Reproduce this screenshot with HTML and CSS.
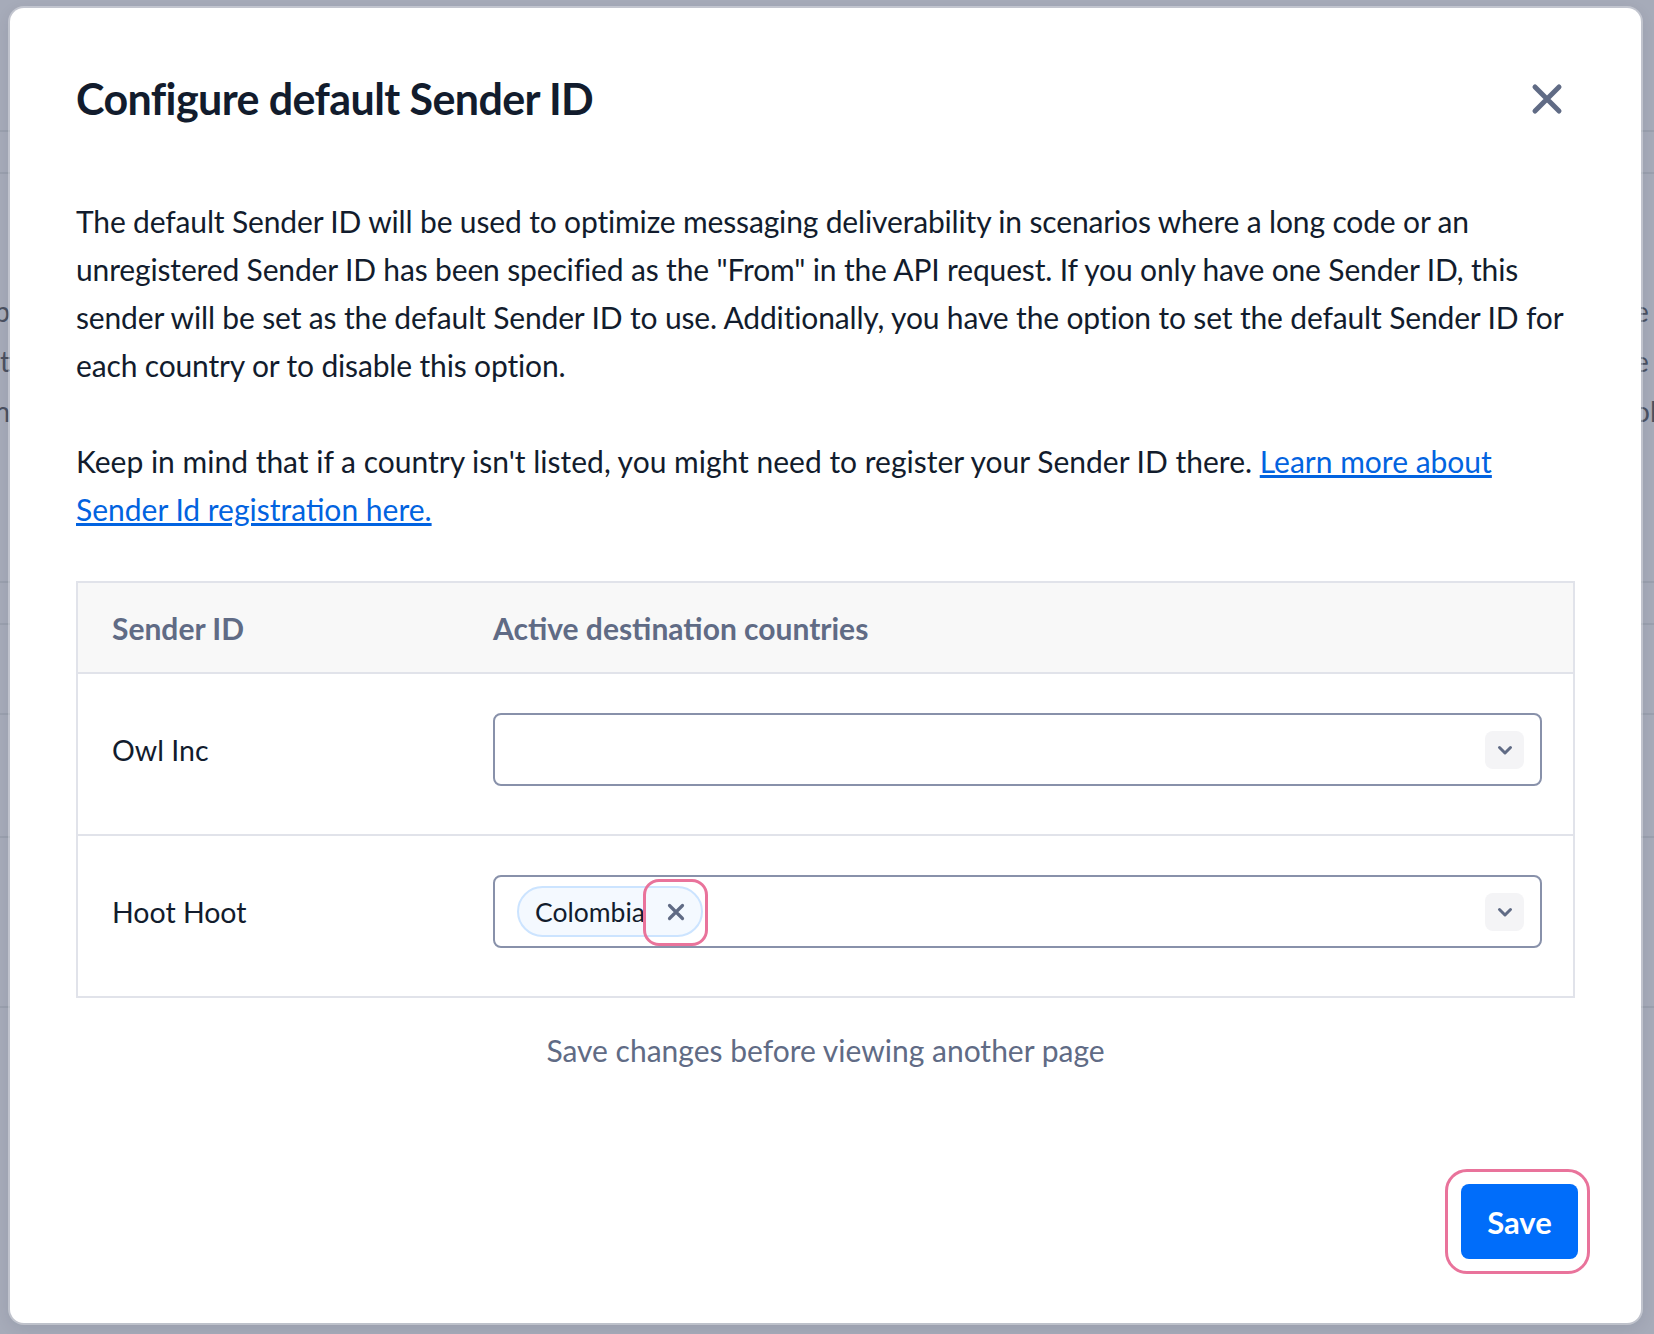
FILE: index.html
```html
<!DOCTYPE html>
<html lang="en">
<head>
    <meta charset="UTF-8">
    <title>Configure default Sender ID</title>
    <link rel="stylesheet" href="styles.css">
</head>
<body>

    <!-- Page behind the modal (dimmed) -->
    <div class="page">
        <div class="page-row tall"></div>
        <div class="page-row short"></div>
        <div class="page-row block">
            <div class="edge-text left">
                <span>op</span>
                <span>et</span>
                <span>n</span>
            </div>
            <div class="edge-text right">
                <span>e</span>
                <span>e</span>
                <span>ol</span>
            </div>
        </div>
        <div class="page-row short"></div>
        <div class="page-row mid"></div>
        <div class="page-row row2"></div>
        <div class="page-row row3"></div>
    </div>

    <div class="modal">
        <div class="modal-header">
            <h1>Configure default Sender ID</h1>
            <button class="close-btn" aria-label="Close">
                <svg width="32" height="32" viewBox="0 0 32 32">
                    <path d="M4 4 L28 28 M28 4 L4 28" stroke="#606b85" stroke-width="5" stroke-linecap="round" fill="none"/>
                </svg>
            </button>
        </div>

        <div class="modal-body">
            <p>The default Sender ID will be used to optimize messaging deliverability in scenarios where a long code or an unregistered Sender ID has been specified as the "From" in the API request. If you only have one Sender ID, this sender will be set as the default Sender ID to use. Additionally, you have the option to set the default Sender ID for each country or to disable this option.</p>
            <p class="hint">Keep in mind that if a country isn't listed, you might need to register your Sender ID there. <a href="#">Learn more about Sender Id registration here.</a></p>

            <table class="sender-table">
                <thead>
                    <tr>
                        <th class="col-sender">Sender ID</th>
                        <th>Active destination countries</th>
                    </tr>
                </thead>
                <tbody>
                    <tr>
                        <td class="col-sender">Owl Inc</td>
                        <td>
                            <div class="combo">
                                <div class="combo-values"></div>
                                <span class="chevron">
                                    <svg width="20" height="20" viewBox="0 0 20 20">
                                        <path d="M4.5 7.5 L10 13 L15.5 7.5" stroke="#606b85" stroke-width="3" stroke-linecap="round" stroke-linejoin="round" fill="none"/>
                                    </svg>
                                </span>
                            </div>
                        </td>
                    </tr>
                    <tr>
                        <td class="col-sender">Hoot Hoot</td>
                        <td>
                            <div class="combo">
                                <div class="combo-values">
                                    <span class="pill">
                                        Colombia
                                        <span class="pill-remove">
                                            <svg width="18" height="18" viewBox="0 0 18 18">
                                                <path d="M2.5 2.5 L15.5 15.5 M15.5 2.5 L2.5 15.5" stroke="#606b85" stroke-width="3.2" stroke-linecap="round" fill="none"/>
                                            </svg>
                                        </span>
                                    </span>
                                </div>
                                <span class="chevron">
                                    <svg width="20" height="20" viewBox="0 0 20 20">
                                        <path d="M4.5 7.5 L10 13 L15.5 7.5" stroke="#606b85" stroke-width="3" stroke-linecap="round" stroke-linejoin="round" fill="none"/>
                                    </svg>
                                </span>
                            </div>
                        </td>
                    </tr>
                </tbody>
            </table>

            <div class="note">Save changes before viewing another page</div>
        </div>

        <div class="modal-footer">
            <div class="highlight">
                <button class="save-btn">Save</button>
            </div>
        </div>
    </div>

</body>
</html>
```

FILE: styles.css
```css
body {
    margin: 0;
    background-color: #a6abb9;
    font-family: Lato, "Noto Sans", sans-serif;
    color: #121c2d;
    height: 1334px;
    overflow: hidden;
}

/* dimmed page behind */
.page {
    display: flex;
    flex-direction: column;
}
.page-row {
    border-bottom: 2px solid #9aa0ae;
}
.page-row.tall { height: 130px; }
.page-row.short { height: 40px; }
.page-row.block { height: 407px; display: flex; justify-content: space-between; }
.page-row.mid { height: 88px; }
.page-row.row2 { height: 121px; }
.page-row.row3 { height: 168px; }
.edge-text {
    display: flex;
    flex-direction: column;
    padding-top: 112px;
    font-size: 28px;
    line-height: 50px;
    color: #4b5161;
    overflow: hidden;
    white-space: nowrap;
}
.edge-text.left {
    width: 10px;
    direction: rtl;
}
.edge-text.right {
    width: 20px;
}

/* modal */
.modal {
    position: absolute;
    left: 10px;
    top: 8px;
    width: 1631px;
    height: 1315px;
    background-color: #fff;
    border-radius: 14px;
    box-shadow: 0 0 0 2px rgba(255, 255, 255, 0.35), 0 4px 16px rgba(18, 28, 45, 0.1);
    display: flex;
    flex-direction: column;
    box-sizing: border-box;
}
.modal-header {
    display: flex;
    align-items: center;
    justify-content: space-between;
    padding: 63px 78px 0 66px;
}
.modal-header h1 {
    margin: 0;
    font-size: 43px;
    line-height: 56px;
    font-weight: 700;
    letter-spacing: -0.6px;
    color: #121c2d;
}
.close-btn {
    background: none;
    border: none;
    padding: 0;
    width: 32px;
    height: 32px;
    cursor: pointer;
}

.modal-body {
    padding: 70px 66px 0 66px;
}
.modal-body p {
    margin: 0 0 48px 0;
    font-size: 30px;
    line-height: 48px;
    letter-spacing: -0.15px;
}
.modal-body p.hint {
    letter-spacing: 0;
}
.modal-body a {
    color: #0263e0;
}

.sender-table {
    width: 100%;
    border-collapse: collapse;
    border: 2px solid #e1e3ea;
    margin-top: 1px;
}
.sender-table th {
    background-color: #f8f8f8;
    color: #606b85;
    font-size: 30px;
    font-weight: 700;
    text-align: left;
    height: 89px;
    padding: 0 31px 0 0;
    border-bottom: 2px solid #e1e3ea;
}
.sender-table td {
    font-size: 28.5px;
    padding: 39px 31px 48px 0;
    border-bottom: 2px solid #e1e3ea;
}
.sender-table .col-sender {
    width: 350px;
    padding-left: 34px;
}

.combo {
    display: flex;
    align-items: center;
    height: 73px;
    box-sizing: border-box;
    border: 2px solid #8891aa;
    border-radius: 8px;
    padding: 0 16px 0 22px;
}
.combo-values {
    flex: 1;
    display: flex;
    align-items: center;
}
.chevron {
    width: 39px;
    height: 38px;
    background-color: #f4f4f6;
    border-radius: 8px;
    display: flex;
    align-items: center;
    justify-content: center;
}
.pill {
    display: inline-flex;
    align-items: center;
    height: 51px;
    box-sizing: border-box;
    border: 2px solid #cce4ff;
    background-color: #f4f9ff;
    border-radius: 26px;
    padding: 0 16px 0 16px;
    font-size: 26.5px;
    color: #121c2d;
    gap: 22px;
}
.pill-remove {
    position: relative;
    display: flex;
}
.pill-remove::after {
    content: "";
    position: absolute;
    left: -24px;
    top: -24px;
    width: 59px;
    height: 61px;
    border: 3px solid #e9739b;
    border-radius: 16px;
}

.note {
    text-align: center;
    color: #606b85;
    font-size: 30px;
    line-height: 48px;
    margin-top: 28px;
}

.modal-footer {
    margin-top: auto;
    display: flex;
    justify-content: flex-end;
    padding: 0 51px 49px 0;
}
.highlight {
    border: 3px solid #e9739b;
    border-radius: 22px;
    padding: 12px 9px 12px 13px;
}
.save-btn {
    display: block;
    width: 117px;
    height: 75px;
    background-color: #006dfa;
    color: #fff;
    border: none;
    border-radius: 8px;
    font-family: Lato, "Noto Sans", sans-serif;
    font-size: 31px;
    font-weight: 700;
    cursor: pointer;
}
```
